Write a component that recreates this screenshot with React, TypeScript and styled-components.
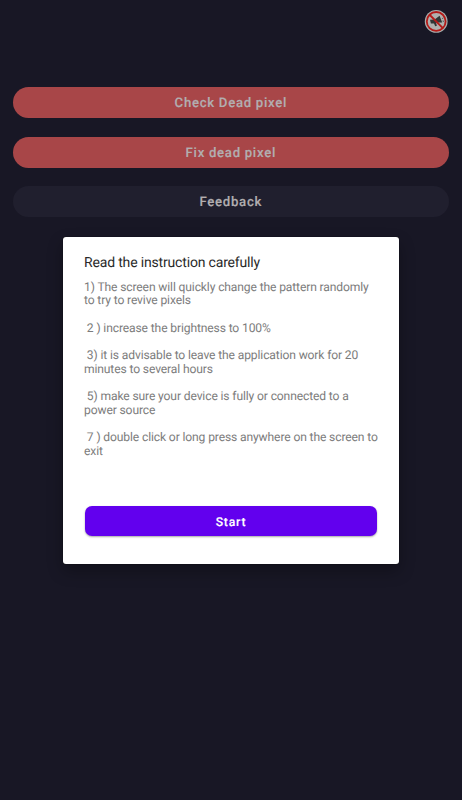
import React from "react";
import styled, { createGlobalStyle } from "styled-components";

const Global = createGlobalStyle`
  * { box-sizing: border-box; }
  body { margin: 0; background: #181725; font-family: Roboto, sans-serif; text-rendering: geometricPrecision; }
`;

const Screen = styled.main`
  position: relative;
  width: 462px;
  height: 800px;
  overflow: hidden;
  background: #181725;
`;

const TopBar = styled.header`
  display: flex;
  justify-content: flex-end;
  height: 87px;
  padding: 9px 14px 0 0;
`;

const NoAdsButton = styled.button`
  width: 24px;
  height: 24px;
  padding: 0;
  border: 0;
  background: transparent;

  svg {
    display: block;
  }
`;

const Menu = styled.nav`
  display: flex;
  flex-direction: column;
  gap: 18.6px;
  padding: 0 13px 0 12.6px;
`;

const PillButton = styled.button<{ $tone: "red" | "dark" }>`
  height: 31px;
  border: 0;
  border-radius: 16px;
  padding: 2px 0 0;
  background: ${(p) => (p.$tone === "red" ? "#a84648" : "#201f2e")};
  color: #b2aeb0;
  font: 500 13.2px/30px Roboto, sans-serif;
  -webkit-text-stroke: 0.15px currentColor;
  letter-spacing: 0.7px;
  text-rendering: geometricPrecision;
`;

const Overlay = styled.div`
  position: absolute;
  inset: 0;
  display: flex;
  justify-content: center;
  align-items: center;
`;

const Dialog = styled.section`
  width: 336px;
  height: 327px;
  padding: 16px 21px 0;
  border-radius: 3px;
  background: #fff;
  box-shadow: 0 0 1px #000, 0 7px 16px rgba(0, 0, 0, 0.3);
`;

const Title = styled.h1`
  margin: 0;
  height: 27px;
  color: #2a2a2a;
  font: 400 14px/20px Roboto, sans-serif;
  letter-spacing: -0.17px;
`;

const Instructions = styled.p`
  margin: 0;
  height: 226px;
  padding-top: 1px;
  white-space: pre;
  color: #7c7c7c;
  font: 400 12.1px/13.67px Roboto, sans-serif;
  letter-spacing: -0.13px;
`;

const StartButton = styled.button`
  display: block;
  width: 292px;
  height: 30.5px;
  margin-left: 1px;
  padding: 1px 0 0;
  border: 0;
  border-radius: 7px;
  background: #6200ee;
  color: #fff;
  font: 500 12.2px/30px Roboto, sans-serif;
  -webkit-text-stroke: 0.15px currentColor;
  letter-spacing: 0.8px;
  text-rendering: geometricPrecision;
  box-shadow: 0 1px 2px rgba(0, 0, 0, 0.35);
`;

const text = `1) The screen will quickly change the pattern randomly
to try to revive pixels

 2 ) increase the brightness to 100%

 3) it is advisable to leave the application work for 20
minutes to several hours

 5) make sure your device is fully or connected to a
power source

 7 ) double click or long press anywhere on the screen to
exit`;

const NoAdsIcon = () => (
  <svg width="24" height="24" viewBox="0 0 24 24" aria-hidden="true">
    <circle cx="12.2" cy="12.4" r="11.4" fill="#a9adac" />
    <circle cx="12.2" cy="12.4" r="9.4" fill="#b0b0ae" stroke="#b31a18" strokeWidth="1.8" />
    <path
      d="M6 10.8l4.6-.3 5-3.7 2.6 6.7-4.9.1-1.2.5.8 2.7-1.7.5-1.2-2.9-3.1.2z"
      fill="#303635"
    />
    <path d="M18.3 9.5l1.1-.5M18.7 12l1.2.3" stroke="#303635" strokeWidth=".9" />
    <path d="M5.8 6l12.8 12.8" stroke="#b31a18" strokeWidth="1.9" />
  </svg>
);

export default function App() {
  return (
    <Screen>
      <Global />
      <TopBar>
        <NoAdsButton aria-label="Remove ads">
          <NoAdsIcon />
        </NoAdsButton>
      </TopBar>
      <Menu>
        <PillButton $tone="red">Check Dead pixel</PillButton>
        <PillButton $tone="red">Fix dead pixel</PillButton>
        <PillButton $tone="dark">Feedback</PillButton>
      </Menu>
      <Overlay>
        <Dialog>
          <Title>Read the instruction carefully</Title>
          <Instructions>{text}</Instructions>
          <StartButton>Start</StartButton>
        </Dialog>
      </Overlay>
    </Screen>
  );
}
